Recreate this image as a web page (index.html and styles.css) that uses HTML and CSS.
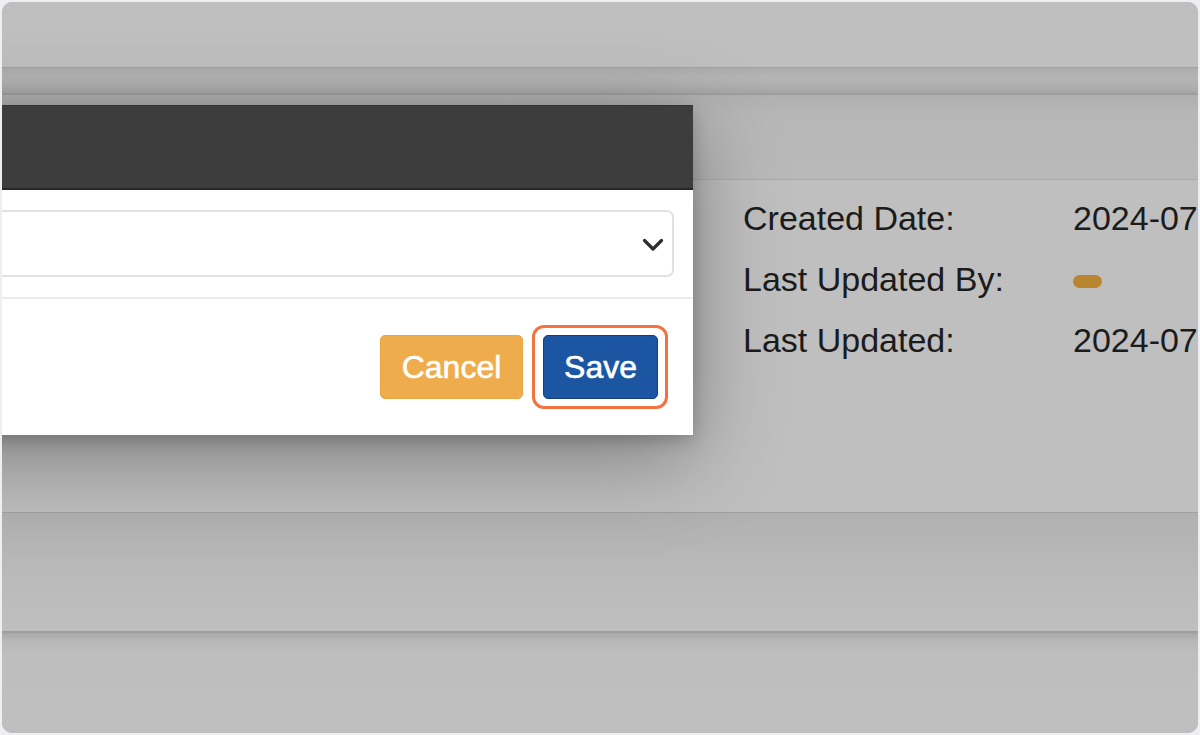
FILE: index.html
```html
<!DOCTYPE html>
<html lang="en">
<head>
<meta charset="utf-8">
<title>Edit record</title>
<link rel="stylesheet" href="styles.css">
</head>
<body>
<div class="frame">
  <div class="topbar"></div>
  <div class="navbar"></div>
  <div class="panel-head"></div>
  <div class="panel-body">
    <dl class="details">
      <dt>Created Date:</dt><dd>2024-07-15 10:32 AM</dd>
      <dt>Last Updated By:</dt><dd><span class="pill"></span></dd>
      <dt>Last Updated:</dt><dd>2024-07-15 10:45 AM</dd>
    </dl>
  </div>
  <div class="panel-two"></div>
  <div class="footer"></div>

  <div class="modal">
    <div class="modal-header"></div>
    <div class="modal-body">
      <div class="select">
        <svg class="chevron" width="22" height="14" viewBox="0 0 22 14"><path d="M2.5 2.5 L11 11 L19.5 2.5" fill="none" stroke="#2e2e2e" stroke-width="3.2" stroke-linecap="round" stroke-linejoin="round"/></svg>
      </div>
    </div>
    <div class="modal-footer">
      <button class="btn btn-cancel">Cancel</button>
      <span class="highlight"><button class="btn btn-save">Save</button></span>
    </div>
  </div>
</div>
</body>
</html>
```

FILE: styles.css
```css
html, body {
  margin: 0;
  padding: 0;
}
body {
  background: #eeeef4;
  width: 1200px;
  height: 735px;
  overflow: hidden;
  font-family: "Liberation Sans", Arial, sans-serif;
}
.frame {
  position: relative;
  margin: 2px;
  width: 1196px;
  height: 731px;
  border-radius: 10px;
  overflow: hidden;
  background: #bfbfbf;
  display: flex;
  flex-direction: column;
}
.topbar {
  height: 65px;
  background: #bfbfbf;
  flex: none;
}
.navbar {
  height: 25px;
  flex: none;
  border-top: 1px solid #a2a2a2;
  border-bottom: 2px solid #9e9e9e;
  background: linear-gradient(#acacac, #b4b4b4 35%, #b1b1b1 65%, #a6a6a6);
}
.panel-head {
  height: 84px;
  flex: none;
  background: linear-gradient(#b0b0b0, #b7b7b7 25%, #b9b9b9);
  border-bottom: 1px solid #ababab;
}
.panel-body {
  height: 324px;
  flex: none;
  padding-top: 8px;
  padding-left: 741px;
  background: #bfbfbf;
  border-bottom: 1px solid #a0a0a0;
}
.details {
  margin: 0;
  display: grid;
  grid-template-columns: 330px max-content;
  font-size: 34px;
  line-height: 61px;
  color: #1b1b1b;
  white-space: nowrap;
}
.details dt, .details dd {
  margin: 0;
}
.pill {
  display: inline-block;
  width: 29px;
  height: 13px;
  border-radius: 7px;
  background: #b9852f;
  vertical-align: 3px;
}
.panel-two {
  height: 118px;
  flex: none;
  background: linear-gradient(#b1b1b1, #bbbbbb 60%, #bfbfbf);
  border-bottom: 2px solid #9d9d9d;
}
.footer {
  flex: 1;
  background: linear-gradient(#a8a8a8, #b7b7b7 8px, #bebebe 20px, #bfbfbf);
}

/* modal dialog over the dimmed page */
.modal {
  position: absolute;
  top: 103px;
  left: -500px;
  width: 1191px;
  background: #fff;
  box-shadow: 0 22px 80px rgba(0,0,0,0.34), 0 5px 16px rgba(0,0,0,0.2);
}
.modal-header {
  height: 82px;
  background: #3d3d3d;
  border-top: 1px solid #333;
  border-bottom: 2px solid #262626;
}
.modal-body {
  padding: 20px 19px 20px 0;
  border-bottom: 2px solid #ececec;
}
.select {
  height: 63px;
  border: 2px solid #e1e1e1;
  border-radius: 7px;
  display: flex;
  align-items: center;
  justify-content: flex-end;
  padding-right: 8px;
}
.chevron {
  display: block;
  margin-top: 2px;
}
.modal-footer {
  display: flex;
  justify-content: flex-end;
  gap: 20px;
  padding: 36px 35px 36px 0;
}
.btn {
  font-family: "Liberation Sans", Arial, sans-serif;
  font-size: 32px;
  line-height: 60px;
  height: 64px;
  padding: 0 20px;
  color: #fff;
  border-radius: 5px;
  -webkit-text-stroke: 0.6px #fff;
  cursor: pointer;
}
.btn-cancel {
  background: #efac4c;
  border: 1px solid #e9a540;
  width: 143px;
}
.btn-save {
  background: #1c56a3;
  border: 1px solid #15407f;
  width: 115px;
  display: block;
}
.highlight {
  position: relative;
  display: block;
}
.highlight::after {
  content: "";
  position: absolute;
  top: -10px;
  left: -11px;
  right: -10px;
  bottom: -10px;
  border: 3.5px solid #f2733f;
  border-radius: 12px;
  pointer-events: none;
}
```
